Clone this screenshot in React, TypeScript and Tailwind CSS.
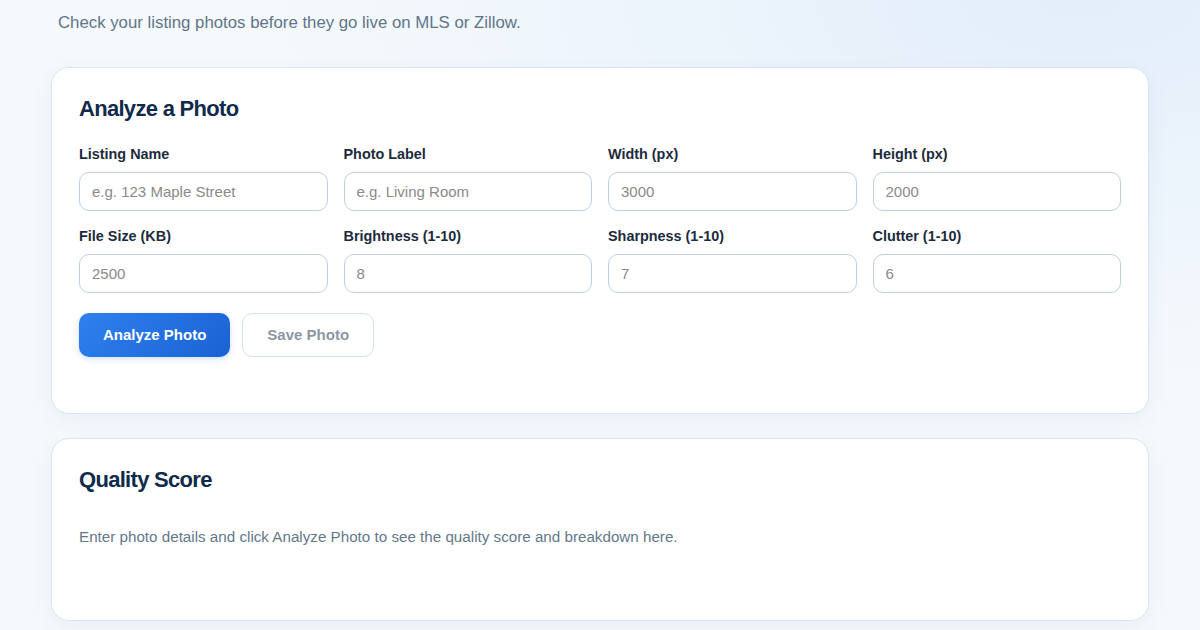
import { useState } from 'react';

const fields = [
  { label: 'Listing Name', placeholder: 'e.g. 123 Maple Street' },
  { label: 'Photo Label', placeholder: 'e.g. Living Room' },
  { label: 'Width (px)', placeholder: '3000' },
  { label: 'Height (px)', placeholder: '2000' },
  { label: 'File Size (KB)', placeholder: '2500' },
  { label: 'Brightness (1-10)', placeholder: '8' },
  { label: 'Sharpness (1-10)', placeholder: '7' },
  { label: 'Clutter (1-10)', placeholder: '6' },
];

export default function App() {
  const [values, setValues] = useState<Record<string, string>>({});

  return (
    <div className="min-h-screen bg-[radial-gradient(ellipse_90%_80%_at_90%_0%,#e3eefa_0%,#eef5fc_45%,#f5f9fc_75%)] font-['Liberation_Sans',Arial,sans-serif]">
      <div className="mx-auto w-[1098px]">
        {/* Header */}
        <p className="pl-[7px] pt-[12px] text-[16.8px] leading-[22px] text-[#5f7589]">
          Check your listing photos before they go live on MLS or Zillow.
        </p>

        {/* Analyze card */}
        <div className="mt-[33px] rounded-[18px] border border-[#d9e5ee] bg-white px-[27px] pt-[29px] pb-[56px] shadow-[0_6px_20px_rgba(30,80,140,0.06)]">
          <h2 className="mb-[24px] text-[22px] font-bold leading-[24px] tracking-[-0.7px] text-[#0f2a4a]">
            Analyze a Photo
          </h2>
          <div className="grid grid-cols-4 gap-x-[16px] gap-y-[16px]">
            {fields.map((f) => (
              <label key={f.label} className="flex flex-col">
                <span className="mb-[9px] text-[14.4px] font-bold leading-[18px] text-[#1b2b3d]">
                  {f.label}
                </span>
                <input
                  type="text"
                  value={values[f.label] ?? ''}
                  onChange={(e) => setValues((prev) => ({ ...prev, [f.label]: e.target.value }))}
                  placeholder={f.placeholder}
                  className="h-[39px] rounded-[10px] border border-[#bcd2e2] bg-white px-[12px] text-[15px] text-[#1b2b3d] placeholder:text-[#8a8a8a] focus:outline-none"
                />
              </label>
            ))}
          </div>
          <div className="mt-[20px] flex gap-[12px]">
            <button className="h-[44px] rounded-[10px] bg-[linear-gradient(135deg,#2f80ee,#1a62d4)] px-[24px] text-[15px] font-bold text-white shadow-[0_2px_6px_rgba(26,98,212,0.2)]">
              Analyze Photo
            </button>
            <button className="h-[44px] rounded-[10px] border border-[#d6e3ec] bg-white px-[24px] text-[15px] font-bold text-[#8b97a3]">
              Save Photo
            </button>
          </div>
        </div>

        {/* Result card */}
        <div className="mt-[24px] h-[183px] rounded-[18px] border border-[#d9e5ee] bg-white px-[27px] pt-[29px] shadow-[0_6px_20px_rgba(30,80,140,0.06)]">
          <h2 className="text-[22px] font-bold leading-[24px] tracking-[-0.7px] text-[#0f2a4a]">
            Quality Score
          </h2>
          <p className="mt-[35px] text-[15.2px] leading-[20px] text-[#64788a]">
            Enter photo details and click Analyze Photo to see the quality score and breakdown here.
          </p>
        </div>
      </div>
    </div>
  );
}
